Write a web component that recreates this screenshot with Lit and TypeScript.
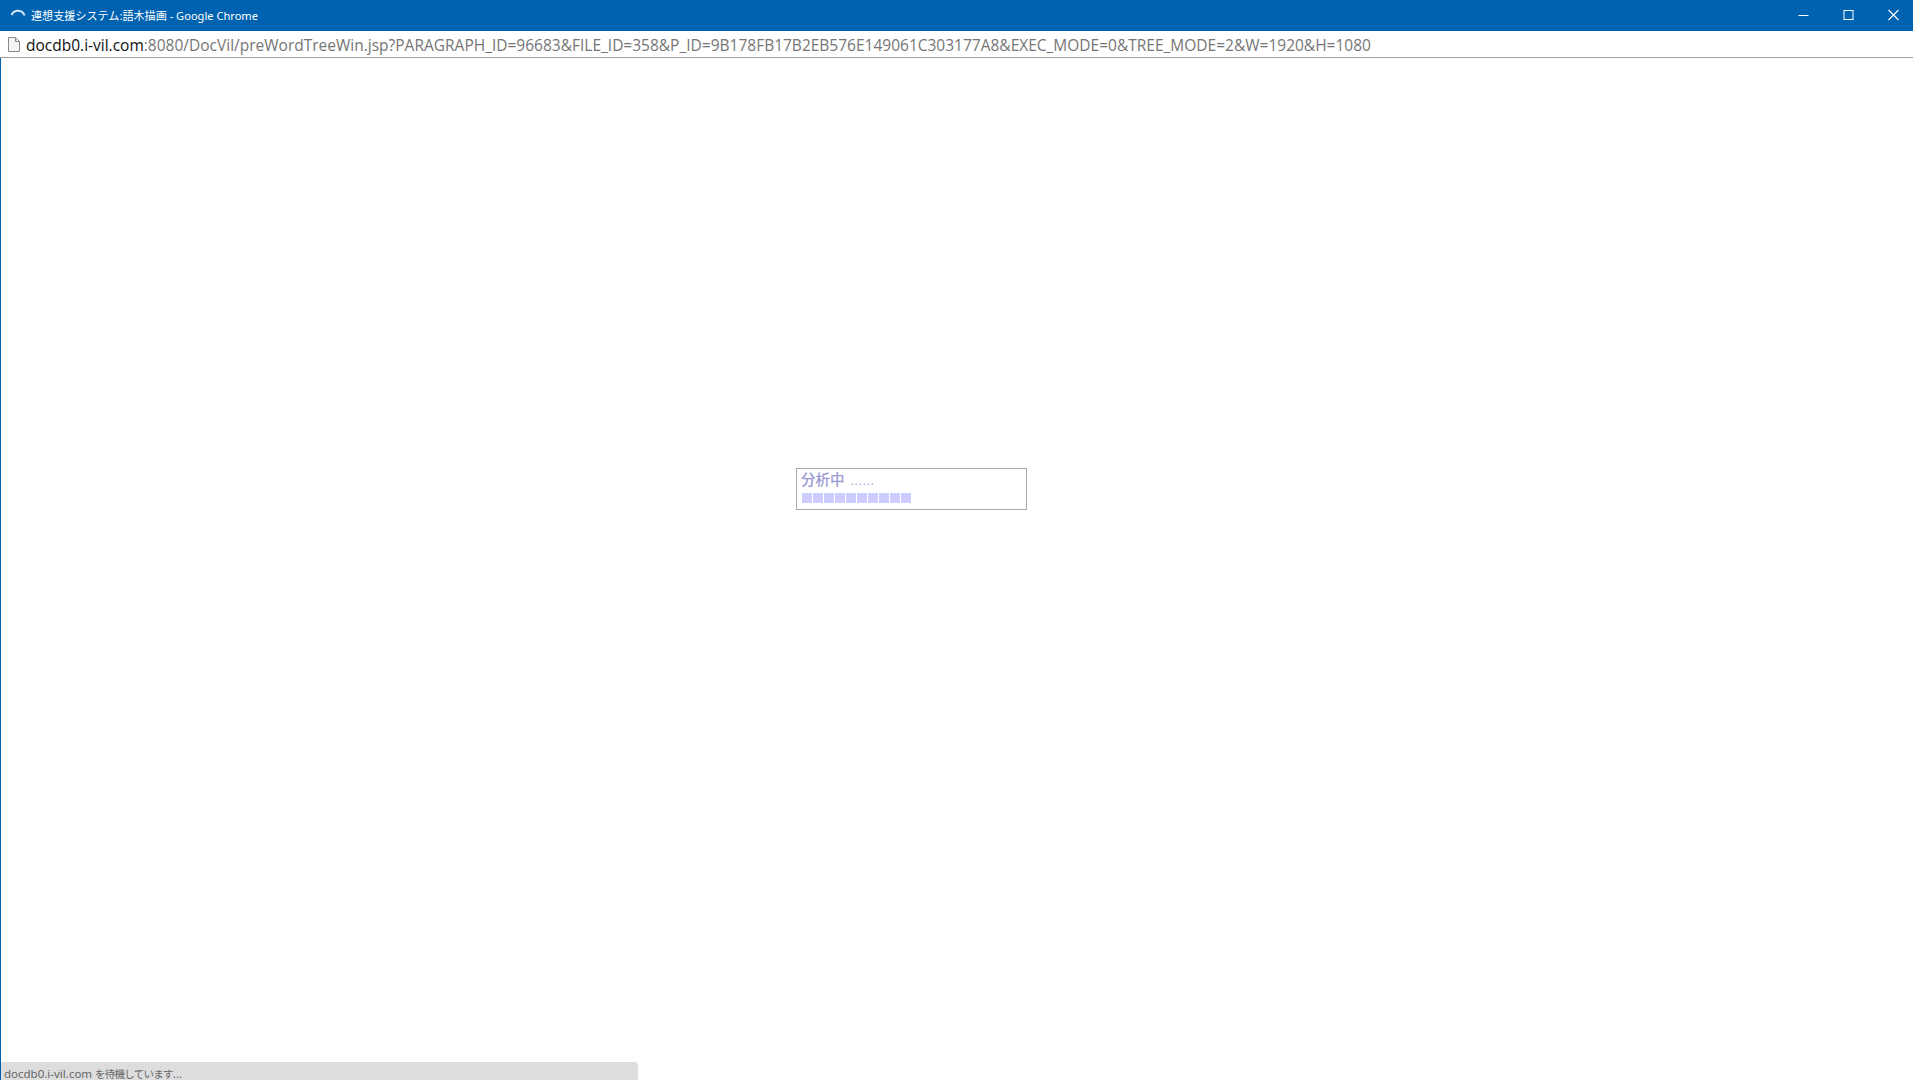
import { LitElement, html, css } from "lit";
import { customElement } from "lit/decorators.js";

@customElement("app-root")
export class AppRoot extends LitElement {
  static styles = css`
    :host {
      display: flex;
      flex-direction: column;
      position: relative;
      width: 1913px;
      height: 1080px;
      overflow: hidden;
      background: #fff;
      font-family: "Noto Sans", "Noto Sans CJK JP", sans-serif;
    }
    .title {
      display: flex;
      align-items: center;
      height: 31px;
      flex: none;
      background: #0063b1;
      color: #fff;
      font-size: 11.1px;
      overflow: hidden;
    }
    .spin { margin-left: 10px; width: 16px; height: 16px; flex: none; }
    .title-text { margin: -1px 0 0 5px; flex: 1; min-width: 0; white-space: nowrap; }
    .wc { display: flex; flex: none; align-items: center; margin-right: -3px; }
    .wc svg { display: block; width: 45px; height: 31px; flex: none; }
    .address {
      display: flex;
      align-items: center;
      height: 26px;
      flex: none;
      box-sizing: border-box;
      border-bottom: 1px solid #a0a0a0;
      padding-left: 7px;
      margin-top: 1px;
      white-space: nowrap;
      font-family: "Open Sans", "Noto Sans", sans-serif;
      font-size: 15.5px;
      color: #767676;
    }
    .doc { width: 14px; height: 17px; flex: none; margin-right: 5px; }
    .host { color: #111; }
    .main {
      flex: 1;
      border-left: 1px solid #0063b1;
      padding: 410px 0 0 795px;
    }
    .box {
      box-sizing: border-box;
      width: 231px;
      height: 42px;
      border: 1px solid #aaa;
      padding: 0 0 0 4px;
      color: #9a9ad0;
    }
    .label {
      display: flex;
      align-items: baseline;
      height: 24px;
      font-size: 14.5px;
      font-weight: 500;
      font-family: "Noto Sans CJK JP", sans-serif;
      line-height: 20px;
    }
    .dots { font-size: 11px; margin-left: 6px; letter-spacing: 1px; font-weight: 400; }
    .bars { display: flex; gap: 1px; margin-left: 1px; }
    .bar { width: 10px; height: 10px; background: #ccccff; }
    .status {
      position: absolute;
      left: 1px;
      bottom: 0;
      width: 637px;
      height: 18px;
      box-sizing: border-box;
      padding: 3px 0 0 3px;
      background: #dddddd;
      border-top-right-radius: 4px;
      color: #666;
      font-size: 11.5px;
      line-height: 18px;
      white-space: nowrap;
    }
    .narrow { font-size: 10.5px; letter-spacing: -0.75px; }
  `;

  render() {
    return html`
      <div class="title">
        <svg class="spin" viewBox="0 0 16 16" fill="none">
          <path d="M1.5 7A7 7 0 0 1 14.5 7.5" stroke="#d7e6f3" stroke-width="2"/>
        </svg>
        <span class="title-text">連想支援システム:語木描画 - Google Chrome</span>
        <div class="wc">
          <svg viewBox="0 0 45 31" fill="none" stroke="#fff" stroke-width="1">
            <path d="M17.5 15.5H27.5"/>
          </svg>
          <svg viewBox="0 0 45 31" fill="none" stroke="#fff" stroke-width="1">
            <rect x="18" y="10.5" width="9" height="9"/>
          </svg>
          <svg viewBox="0 0 45 31" fill="none" stroke="#fff" stroke-width="1.1">
            <path d="M17.5 10L27.5 20M27.5 10L17.5 20"/>
          </svg>
        </div>
      </div>
      <div class="address">
        <svg class="doc" viewBox="0 0 14 17" fill="none">
          <path d="M1.5 1.5H8.5L12.5 5.5V15.5H1.5Z" fill="#f4f4f4" stroke="#8a8a8a"/>
          <path d="M8.5 1.5V5.5H12.5" stroke="#8a8a8a"/>
        </svg>
        <span class="host">docdb0.i-vil.com</span><span>:8080/DocVil/preWordTreeWin.jsp?PARAGRAPH_ID=96683&amp;FILE_ID=358&amp;P_ID=9B178FB17B2EB576E149061C303177A8&amp;EXEC_MODE=0&amp;TREE_MODE=2&amp;W=1920&amp;H=1080</span>
      </div>
      <div class="main">
        <div class="box">
          <div class="label"><span>分析中</span><span class="dots">......</span></div>
          <div class="bars">
            ${Array.from({ length: 10 }, () => html`<div class="bar"></div>`)}
          </div>
        </div>
      </div>
      <div class="status">docdb0.i-vil.com <span class="narrow">を待機しています</span>...</div>
    `;
  }
}
